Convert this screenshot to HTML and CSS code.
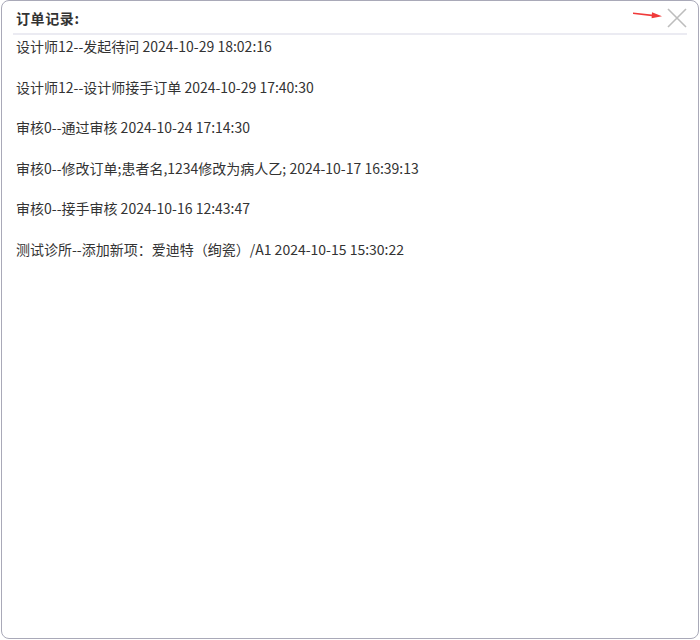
FILE: index.html
```html
<!DOCTYPE html>
<html>

<head>
    <title>订单记录</title>
    <link rel="stylesheet" href="styles.css">
</head>

<body>
    <div class="dialog">
        <div class="dialog-head">
            <span class="dialog-title">订单记录:</span>
            <svg class="arrow" width="30" height="8" viewBox="0 0 30 8">
                <path d="M0 2.2 L21 4.6" stroke="#f03a3a" stroke-width="1.6" fill="none" />
                <path d="M19 1.2 L29 5.2 L18.6 7.2 Z" fill="#f03a3a" />
            </svg>
            <button class="close-btn" aria-label="close">
                <svg width="20" height="20" viewBox="0 0 20 20">
                    <path d="M1 1 L19 19 M19 1 L1 19" stroke="#bdbdbd" stroke-width="1.6" fill="none" />
                </svg>
            </button>
        </div>
        <ul class="log-list">
            <li>设计师12--发起待问 2024-10-29 18:02:16</li>
            <li>设计师12--设计师接手订单 2024-10-29 17:40:30</li>
            <li>审核0--通过审核 2024-10-24 17:14:30</li>
            <li>审核0--修改订单;患者名,1234修改为病人乙; 2024-10-17 16:39:13</li>
            <li>审核0--接手审核 2024-10-16 12:43:47</li>
            <li>测试诊所--添加新项：爱迪特（绚瓷）/A1 2024-10-15 15:30:22</li>
        </ul>
    </div>
</body>

</html>
```

FILE: styles.css
```css
* {
    box-sizing: border-box;
}

body {
    margin: 0;
    background: #ffffff;
    font-family: "Microsoft YaHei", "Noto Sans CJK SC", "Noto Sans", sans-serif;
    color: #333333;
}

.dialog {
    margin-left: 1px;
    width: 698px;
    height: 639px;
    border: 1px solid #a9a9b8;
    border-radius: 8px;
    background: #ffffff;
    padding: 0 11px 0 11px;
}

.dialog-head {
    position: relative;
    display: flex;
    align-items: center;
    justify-content: space-between;
    height: 34px;
    padding: 1px 0 0 3px;
    border-bottom: 2px solid #ebebf2;
}

.dialog-title {
    font-size: 14px;
    font-weight: bold;
    letter-spacing: 0.6px;
    color: #333333;
}

.arrow {
    position: absolute;
    right: 24px;
    top: 10px;
}

.close-btn {
    border: none;
    background: none;
    padding: 0;
    width: 20px;
    height: 20px;
    cursor: pointer;
}

.close-btn svg {
    display: block;
}

.log-list {
    list-style: none;
    margin: 0;
    padding: 0 0 0 3px;
}

.log-list li {
    font-size: 14px;
    line-height: 20px;
    height: 40.6px;
    padding-top: 1px;
}
```
